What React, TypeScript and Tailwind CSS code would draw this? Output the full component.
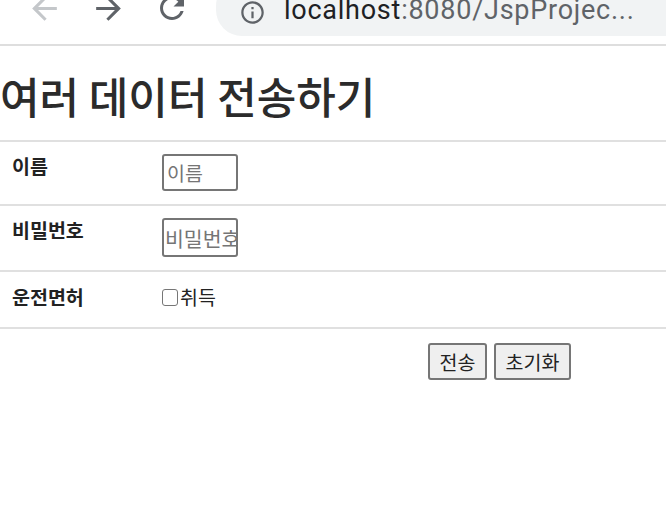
import React from "react";

const KR = { fontFamily: '"Noto Sans CJK KR", "Noto Sans", sans-serif' };

function Icon({ d, size, color }: { d: string; size: number; color: string }) {
  return (
    <svg width={size} height={size} viewBox="0 0 24 24" fill={color} className="shrink-0">
      <path d={d} />
    </svg>
  );
}

export default function App() {
  return (
    <div className="w-[666px] h-[516px] bg-white overflow-hidden" style={KR}>
      {/* browser toolbar */}
      <div className="h-[46px] overflow-hidden border-b-2 border-[#dedede]">
        <div className="flex items-center h-[56px] -mt-[20px]">
          <div className="ml-[26px]">
            <Icon size={37} color="#c4c7ca" d="M20 11H7.83l5.59-5.59L12 4l-8 8 8 8 1.41-1.41L7.83 13H20v-2z" />
          </div>
          <div className="ml-[27px]">
            <Icon size={37} color="#5f6368" d="M12 4l-1.41 1.41L16.17 11H4v2h12.17l-5.58 5.59L12 20l8-8z" />
          </div>
          <div className="ml-[27px]">
            <Icon
              size={36}
              color="#5f6368"
              d="M17.65 6.35C16.2 4.9 14.21 4 12 4c-4.42 0-7.99 3.58-7.99 8s3.57 8 7.99 8c3.73 0 6.84-2.55 7.73-6h-2.08c-.82 2.33-3.04 4-5.65 4-3.31 0-6-2.69-6-6s2.69-6 6-6c1.66 0 3.14.69 4.22 1.78L13 11h7V4l-2.35 2.35z"
            />
          </div>
          <div className="ml-[26px] flex-1 h-[56px] rounded-l-[26px] bg-[#f1f3f4] flex items-center pt-[9px] pl-[23px]">
            <Icon
              size={27}
              color="#5f6368"
              d="M11 7h2v2h-2zm0 4h2v6h-2zm1-9C6.48 2 2 6.48 2 12s4.48 10 10 10 10-4.48 10-10S17.52 2 12 2zm0 18c-4.41 0-8-3.59-8-8s3.59-8 8-8 8 3.59 8 8-3.59 8-8 8z"
            />
            <div
              className="ml-[18px] text-[27px] leading-[30px] tracking-[0.75px] whitespace-nowrap -mt-[5px]"
              style={{ fontFamily: '"Roboto", "Liberation Sans", sans-serif' }}
            >
              <span className="text-[#202124]">localhost</span>
              <span className="text-[#5f6368]">:8080/JspProjec...</span>
            </div>
          </div>
        </div>
      </div>

      {/* title */}
      <div className="border-b-2 border-[#e0e0e0] h-[96px] pt-[28px]">
        <h1 className="text-[43px] leading-[43px] text-[#2b2b2b] font-medium whitespace-nowrap">
          여러 데이터 전송하기
        </h1>
      </div>

      {/* rows */}
      <div className="flex h-[64px] border-b-2 border-[#e0e0e0]">
        <div className="w-[162px] pl-[12px] pt-[11px] text-[19.5px] leading-[26px] font-bold text-[#222]">이름</div>
        <div className="pt-[12px]">
          <input
            placeholder="이름"
            className="w-[76px] h-[37px] border-2 border-[#767676] rounded-[3px] px-[3px] text-[19.5px] placeholder:text-[#757575] outline-none"
            style={KR}
          />
        </div>
      </div>
      <div className="flex h-[66px] border-b-2 border-[#e0e0e0]">
        <div className="w-[162px] pl-[12px] pt-[11px] text-[19.5px] leading-[26px] font-bold text-[#222]">비밀번호</div>
        <div className="pt-[12px]">
          <input
            type="password"
            placeholder="비밀번호"
            className="w-[76px] h-[39px] border-2 border-[#767676] rounded-[3px] pl-[1px] pr-0 text-[20.5px] placeholder:text-[#757575] outline-none"
            style={KR}
          />
        </div>
      </div>
      <div className="flex h-[57px] border-b-2 border-[#e0e0e0]">
        <div className="w-[162px] pl-[12px] pt-[12px] text-[19.5px] leading-[26px] font-bold text-[#222]">운전면허</div>
        <div className="pt-[12px]">
          <label className="flex items-center text-[19.5px] leading-[26px] text-[#222]">
            <span className="w-[16px] h-[17px] border-[1.5px] border-[#767676] rounded-[3px] mr-[2px] inline-block" />
            취득
          </label>
        </div>
      </div>

      {/* buttons */}
      <div className="flex gap-[7px] pl-[428px] pt-[14px]">
        <button className="w-[59px] h-[37px] bg-[#efefef] border-2 border-[#767676] rounded-[3px] text-[19.5px] text-[#222] leading-none">
          전송
        </button>
        <button className="w-[77px] h-[37px] bg-[#efefef] border-2 border-[#767676] rounded-[3px] text-[19.5px] text-[#222] leading-none">
          초기화
        </button>
      </div>
    </div>
  );
}
